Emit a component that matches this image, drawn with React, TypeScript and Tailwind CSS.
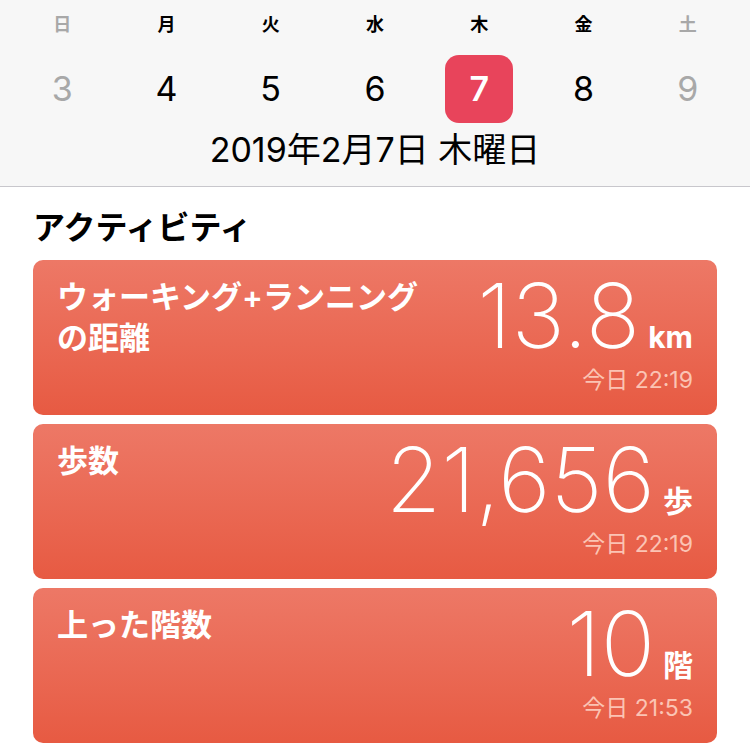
import React from "react"

const FONT = "font-['Inter','Noto_Sans_CJK_JP',sans-serif]"

type Day = { label: string; date: number; muted: boolean; selected?: boolean }

const WEEK: Day[] = [
  { label: "日", date: 3, muted: true },
  { label: "月", date: 4, muted: false },
  { label: "火", date: 5, muted: false },
  { label: "水", date: 6, muted: false },
  { label: "木", date: 7, muted: false, selected: true },
  { label: "金", date: 8, muted: false },
  { label: "土", date: 9, muted: true },
]

type Metric = { title: string[]; value: string; unit: string; time: string }

const METRICS: Metric[] = [
  { title: ["ウォーキング+ランニング", "の距離"], value: "13.8", unit: "km", time: "今日 22:19" },
  { title: ["歩数"], value: "21,656", unit: "歩", time: "今日 22:19" },
  { title: ["上った階数"], value: "10", unit: "階", time: "今日 21:53" },
]

function WeekStrip() {
  return (
    <div className="bg-[#f7f7f7] border-b border-[#c8c7cc]">
      <div className="grid grid-cols-7 px-[10px]">
        {WEEK.map(d => (
          <div key={d.label} className="flex h-[50px] items-center justify-center">
            <span
              className={`text-[18px] font-bold leading-none ${d.muted ? "text-[#a8a8a8]" : "text-black"}`}
            >
              {d.label}
            </span>
          </div>
        ))}
      </div>
      <div className="grid grid-cols-7 px-[10px] mt-[5px]">
        {WEEK.map(d => (
          <div key={d.date} className="flex h-[68px] items-center justify-center">
            {d.selected ? (
              <div className="flex h-[68px] w-[68px] items-center justify-center rounded-[14px] bg-[#e8445b]">
                <span className="text-[34px] font-semibold leading-none text-white">{d.date}</span>
              </div>
            ) : (
              <span
                className={`text-[34px] leading-none ${d.muted ? "text-[#a8a8a8]" : "text-black"}`}
              >
                {d.date}
              </span>
            )}
          </div>
        ))}
      </div>
      <div className="mt-[7px] pb-[16px] text-center text-[34px] leading-[40px] text-black">
        2019年2月7日 木曜日
      </div>
    </div>
  )
}

function MetricCard({ m }: { m: Metric }) {
  return (
    <div className="flex h-[155px] justify-between rounded-[10px] bg-gradient-to-b from-[#ed7866] to-[#e75a42] px-6">
      <div className="pt-[16px] text-[31px] font-semibold leading-[41px] text-white">
        {m.title.map(line => (
          <div key={line}>{line}</div>
        ))}
      </div>
      <div className="flex flex-col items-end pt-[11px]">
        <div className="flex items-baseline gap-[8px] text-white">
          <span className="text-[90px] font-extralight leading-none">{m.value}</span>
          <span className="text-[30px] font-bold leading-none">{m.unit}</span>
        </div>
        <div className="mt-[8px] text-[23px] leading-[23px] text-[#fbc4b4]">{m.time}</div>
      </div>
    </div>
  )
}

export default function App() {
  return (
    <div className={`min-h-screen bg-white ${FONT}`}>
      <WeekStrip />
      <div className="px-[33px]">
        <h2 className="pt-[21px] pb-[12px] text-[32px] font-bold leading-[40px] text-black">
          アクティビティ
        </h2>
        <div className="flex flex-col gap-[9px]">
          {METRICS.map(m => (
            <MetricCard key={m.value} m={m} />
          ))}
        </div>
      </div>
    </div>
  )
}
